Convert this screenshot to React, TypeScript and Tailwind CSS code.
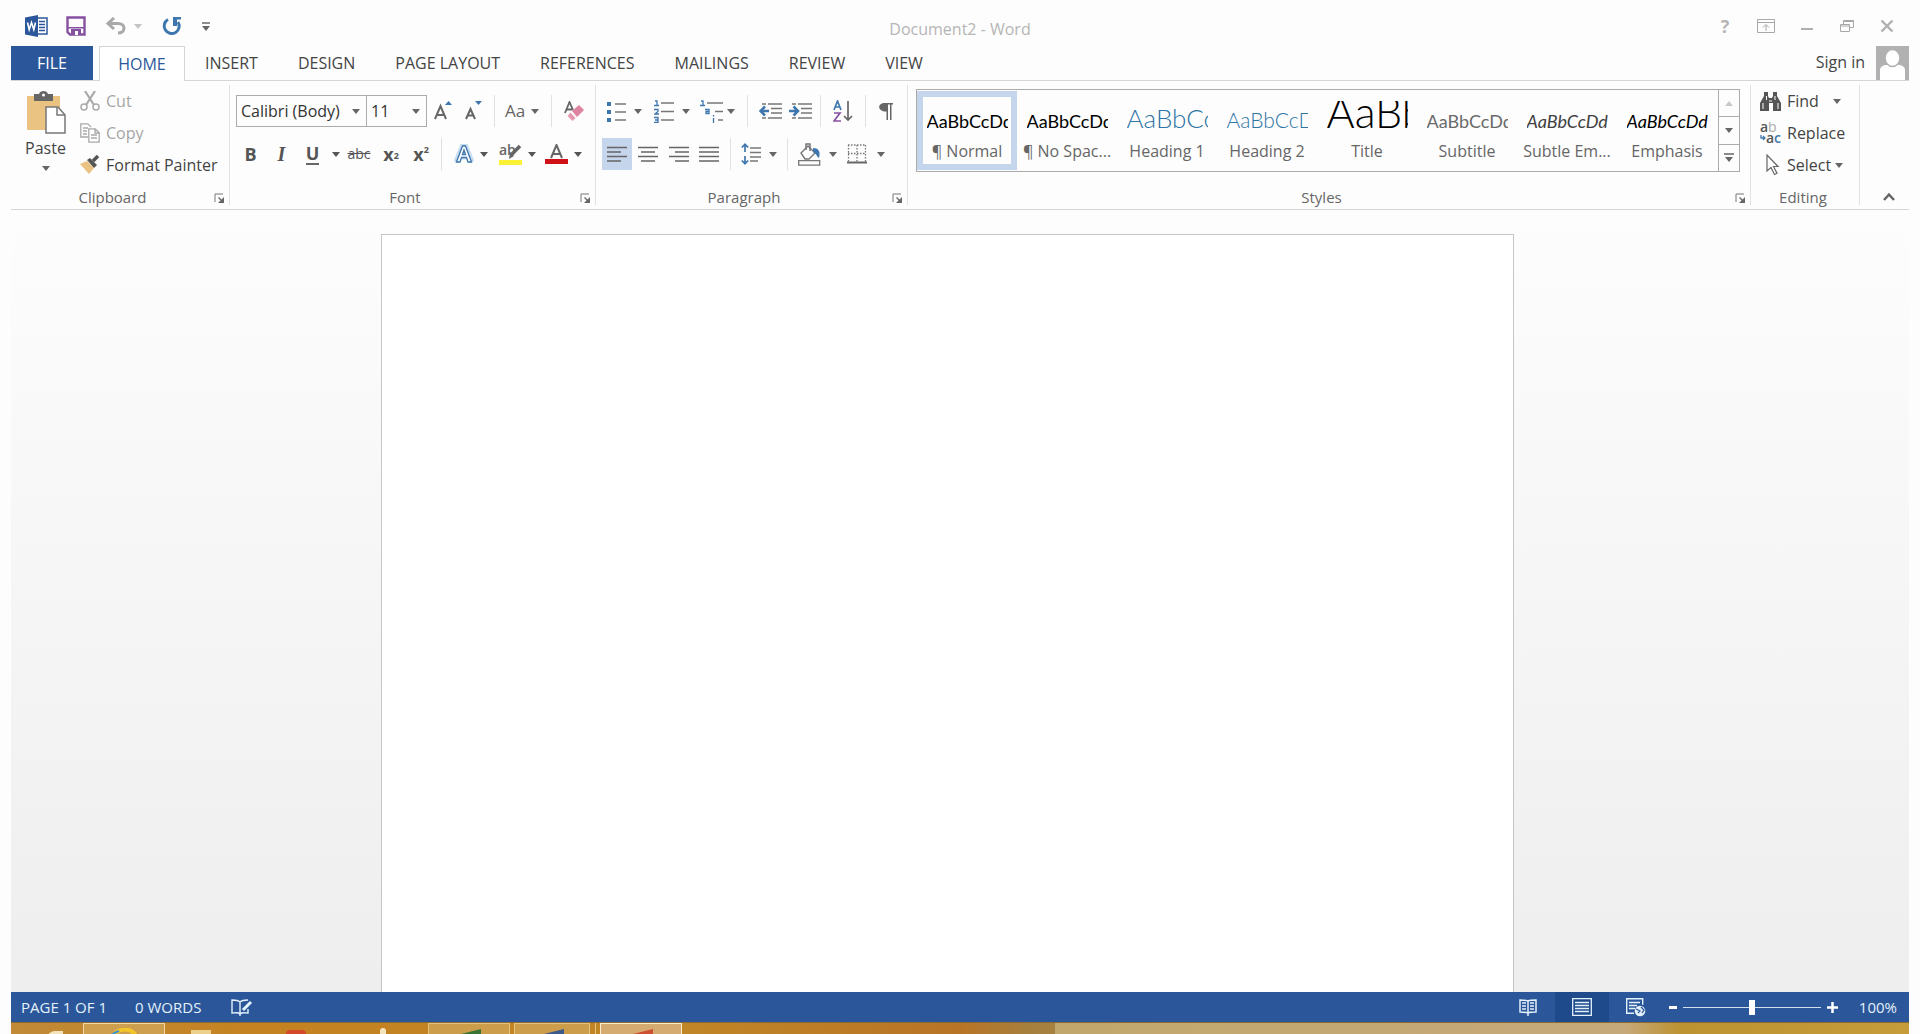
import type { ReactNode } from 'react';
import { clsx } from 'clsx';

const tabs = ['INSERT', 'DESIGN', 'PAGE LAYOUT', 'REFERENCES', 'MAILINGS', 'REVIEW', 'VIEW'];

const styles = [
  { name: '¶ Normal', sample: 'AaBbCcDd', look: 'text-[18px] text-black', active: true },
  { name: '¶ No Spac...', sample: 'AaBbCcDd', look: 'text-[18px] text-black' },
  { name: 'Heading 1', sample: 'AaBbCc', look: 'text-[26px] font-light text-[#2e74a5]' },
  { name: 'Heading 2', sample: 'AaBbCcD', look: 'text-[21px] font-light text-[#2e74a5]' },
  { name: 'Title', sample: 'AaBb', look: 'text-[43px] font-light text-black' },
  { name: 'Subtitle', sample: 'AaBbCcDd', look: 'text-[18px] text-[#6a6a6a]' },
  { name: 'Subtle Em...', sample: 'AaBbCcDd', look: 'text-[18px] italic text-[#404040]' },
  { name: 'Emphasis', sample: 'AaBbCcDd', look: 'text-[18px] italic text-black' },
];

function Caret({ className }: { className?: string }) {
  return (
    <svg viewBox="0 0 8 5" className={clsx('h-[5px] w-2 shrink-0', className)} fill="currentColor" aria-hidden="true">
      <path d="M0 0h8L4 5z" />
    </svg>
  );
}

function Icon({ w, h, children }: { w: number; h: number; children: ReactNode }) {
  return (
    <svg width={w} height={h} viewBox={`0 0 ${w} ${h}`} fill="none" className="shrink-0" aria-hidden="true">
      {children}
    </svg>
  );
}

type ToolProps = { label: string; className?: string; children: ReactNode };

function Tool({ label, className, children }: ToolProps) {
  return (
    <button type="button" aria-label={label} className={clsx('flex h-8 shrink-0 items-center justify-center', className)}>
      {children}
    </button>
  );
}

function Drop({ label, className }: { label: string; className?: string }) {
  return (
    <Tool label={label} className={clsx('w-4', className)}>
      <Caret />
    </Tool>
  );
}

function Divider({ className }: { className?: string }) {
  return <span className={clsx('h-8 w-px shrink-0 bg-[#e1e1e1]', className)} />;
}

type GroupProps = { label: string; launcher?: boolean; className?: string; children: ReactNode };

function Group({ label, launcher = true, className, children }: GroupProps) {
  return (
    <section aria-label={label} className={clsx('flex flex-col border-r border-[#e1e1e1]', className)}>
      <div className="flex-1">{children}</div>
      <div className="flex h-4 items-center pr-1">
        <span className="flex-1 text-center text-[15px] leading-4 text-[#666]">{label}</span>
        {launcher && (
          <button type="button" aria-label={`${label} settings`} className="pt-0.5">
            <Icon w={11} h={11}>
              <path d="M1 9V1h8" stroke="#777" />
              <path d="M4.500 4.500 8.500 8.500" stroke="#666" strokeWidth="1.300" />
              <path d="M10 4v6H4z" fill="#666" />
            </Icon>
          </button>
        )}
      </div>
    </section>
  );
}

function TitleBar() {
  return (
    <header className="flex h-[46px] items-center px-3.5 text-[#b5b5b5]">
      <div className="flex flex-1 items-center pt-1.5">
        <Tool label="Word" className="w-[23px]">
          <Icon w={23} h={22}>
            <rect x="11" y="3" width="11" height="16" fill="#fff" stroke="#2b579a" strokeWidth="1.500" />
            <path d="M14 6.500h6M14 9.500h6M14 12.500h6M14 15.500h6" stroke="#2b579a" strokeWidth="1.500" />
            <path d="M0 2.500 13 0v22L0 19.500z" fill="#2b579a" />
            <path d="m2.500 7.500 1.700 7 2.300-7 2.300 7 1.700-7" stroke="#fff" strokeWidth="1.600" />
          </Icon>
        </Tool>
        <Tool label="Save" className="ml-[18px] w-5">
          <Icon w={20} h={20}>
            <path d="M1.500 1.500h17v17H4l-2.500-2.500z" stroke="#8650a0" strokeWidth="2.400" />
            <path d="M2 11h16v1.500H2zM5 13h10v6H5z" fill="#8650a0" />
            <path d="M9 15h3v4H9z" fill="#fff" />
          </Icon>
        </Tool>
        <Tool label="Undo" className="ml-5 w-5">
          <Icon w={20} h={18}>
            <path d="M8 1 2 6.500 8 12M2.500 6.500H12c8 0 8 9.500 0 9.500" stroke="#a9a9a9" strokeWidth="3" />
          </Icon>
        </Tool>
        <Drop label="Undo history" className="ml-1 text-[#c4c4c4]" />
        <Tool label="Repeat" className="ml-4 w-5">
          <Icon w={20} h={20}>
            <path d="M6 3.500A7.500 7.500 0 1 0 16 6" stroke="#3e77ae" strokeWidth="3" />
            <path d="M11 1h8v2.500h-4V10h-4z" fill="#3e77ae" />
          </Icon>
        </Tool>
        <Tool label="Customize toolbar" className="ml-5 w-2 text-[#666]">
          <Icon w={8} h={9}>
            <path d="M0 1h8" stroke="#666" strokeWidth="1.500" />
            <path d="M0 4h8L4 9z" fill="#666" />
          </Icon>
        </Tool>
      </div>
      <h1 className="pt-3 text-base leading-6">Document2 - Word</h1>
      <div className="flex flex-1 items-center justify-end pt-1.5">
        <Tool label="Help" className="w-6 text-lg font-bold">
          ?
        </Tool>
        <Tool label="Ribbon display options" className="ml-5 w-[18px]">
          <Icon w={18} h={14}>
            <path d="M.5.5h17v13H.5zM.5 3.500h17M9 12V6M6 8.500l3-3 3 3" stroke="#a8a8a8" />
          </Icon>
        </Tool>
        <Tool label="Minimize" className="ml-6 w-4">
          <Icon w={12} h={14}>
            <path d="M0 10h12" stroke="#b0b0b0" strokeWidth="2" />
          </Icon>
        </Tool>
        <Tool label="Restore" className="ml-6 w-4">
          <Icon w={14} h={14}>
            <path d="M.5 5.500h9v7h-9zM.5 7h9M3.500 5V1.500h10v7H10M3.500 2.500h10" stroke="#a8a8a8" />
          </Icon>
        </Tool>
        <Tool label="Close" className="ml-6 w-4">
          <Icon w={14} h={14}>
            <path d="m1.500 1.500 11 11M12.500 1.500l-11 11" stroke="#b0b0b0" strokeWidth="2.400" />
          </Icon>
        </Tool>
      </div>
    </header>
  );
}

function TabBar() {
  return (
    <nav className="flex h-[35px] border-b border-[#d5d5d5] text-base leading-8 text-[#444]">
      <button type="button" className="w-[82px] bg-[#2b579a] text-white">
        FILE
      </button>
      <button type="button" className="-mb-px ml-1.5 w-[86px] border border-b-0 border-[#d5d5d5] bg-white text-[#2b579a]">
        HOME
      </button>
      {tabs.map((tab) => (
        <button key={tab} type="button" className="px-5">
          {tab}
        </button>
      ))}
      <a href="#sign-in" className="ml-auto pr-[11px]">
        Sign in
      </a>
      <Icon w={33} h={34}>
        <path d="M0 0h33v34H0z" fill="#b1b1b1" />
        <path d="M4 34V24c0-3 3-5 7-5h11c4 0 7 2 7 5v10z" fill="#fff" />
        <ellipse cx="16.500" cy="12" rx="7.500" ry="8.500" fill="#fff" stroke="#b1b1b1" strokeWidth="1.500" />
      </Icon>
    </nav>
  );
}

function ClipboardGroup() {
  return (
    <Group label="Clipboard" className="w-[219px]">
      <div className="flex">
        <button type="button" className="flex w-[69px] flex-col items-center pt-1.5 text-base text-[#444]">
          <Icon w={40} h={43}>
            <path d="M1 5h33v34H1z" fill="#eac282" />
            <path d="M8 3h5c1-4 8-4 9 0h5v7H8z" fill="#666" />
            <circle cx="17.500" cy="4" r="1.500" fill="#fff" />
            <path d="M20 16h12l7 8v18H20z" fill="#fff" stroke="#777" strokeWidth="1.500" />
            <path d="M31 16v8h8" stroke="#777" strokeWidth="1.500" />
          </Icon>
          <span className="mt-0.5 leading-6">Paste</span>
          <Caret className="mt-1.5 text-[#666]" />
        </button>
        <div className="flex flex-col text-base text-[#a6a6a6]">
          <button type="button" className="flex h-8 items-center gap-1.5">
            <Icon w={20} h={20}>
              <path d="m5 0 9 14M15 0 6 14" stroke="#a9a9a9" strokeWidth="2.200" />
              <circle cx="4" cy="16" r="3" stroke="#a9a9a9" strokeWidth="1.500" />
              <circle cx="16" cy="16" r="3" stroke="#a9a9a9" strokeWidth="1.500" />
            </Icon>
            Cut
          </button>
          <button type="button" className="flex h-8 items-center gap-1.5">
            <Icon w={20} h={20}>
              <path d="M8 14H.8V.8h7L11 4M3 5h5M3 8h4M3 11h4" stroke="#a9a9a9" strokeWidth="1.300" />
              <path d="M8.800 5.800h6.400l4 4v9.400H8.800zM15 6v4h4M11 12h6M11 15h6" fill="#fff" stroke="#a9a9a9" strokeWidth="1.300" />
            </Icon>
            Copy
          </button>
          <button type="button" className="flex h-8 items-center gap-1.5 text-[#444]">
            <Icon w={20} h={20}>
              <path d="m0 9 7-3 7 7-5 6z" fill="#eac282" />
              <path d="m7 5 3-2 7 7-3 3z" fill="#555" />
              <path d="m13 6 5-5" stroke="#555" strokeWidth="3.500" />
            </Icon>
            Format Painter
          </button>
        </div>
      </div>
    </Group>
  );
}

function FontGroup() {
  return (
    <Group label="Font" className="w-[366px]">
      <div className="flex items-center pt-2.5 pl-1.5 text-[#666]">
        <div className="flex h-8 text-base text-[#333]">
          <div className="flex w-[131px] items-center border border-[#ababab] pr-1.5">
            <input aria-label="Font" defaultValue="Calibri (Body)" className="min-w-0 flex-1 pl-1 outline-none" />
            <Caret className="text-[#666]" />
          </div>
          <div className="-ml-px flex w-[61px] items-center border border-[#ababab] pr-1.5">
            <input aria-label="Font size" defaultValue="11" className="min-w-0 flex-1 pl-1 outline-none" />
            <Caret className="text-[#666]" />
          </div>
        </div>
        <Tool label="Grow font" className="ml-1 w-6">
          <Icon w={18} h={20}>
            <path d="m1 18 5.500-13 5.500 13M3 14h7" stroke="#666" strokeWidth="2" />
            <path d="m11 4 3.500-4L18 4z" fill="#3e77ae" />
          </Icon>
        </Tool>
        <Tool label="Shrink font" className="ml-[7px] w-6">
          <Icon w={18} h={20}>
            <path d="m1 18 4.500-10L10 18M3 14.500h5" stroke="#666" strokeWidth="2" />
            <path d="m10 0 3.500 4L17 0z" fill="#3e77ae" />
          </Icon>
        </Tool>
        <Divider className="ml-2" />
        <Tool label="Change case" className="ml-2.5 text-[17px]">
          Aa
        </Tool>
        <Drop label="Case options" className="ml-0.5" />
        <Divider className="ml-2" />
        <Tool label="Clear formatting" className="ml-3 w-5">
          <Icon w={20} h={21}>
            <path d="m1 12 4.500-11L9 9M2.500 8.500h6" stroke="#666" strokeWidth="1.800" />
            <path d="m8 10 7-6 5 5-7 7z" fill="#df84a0" />
            <path d="m6.500 11.500 5 5.500-3 3-5-5z" fill="#e79bb1" />
          </Icon>
        </Tool>
      </div>
      <div className="flex items-center pt-[11px] pl-[5px] text-lg text-[#555]">
        <Tool label="Bold" className="w-[31px] font-bold">
          B
        </Tool>
        <Tool label="Italic" className="w-[31px] font-bold italic">
          <span className="font-['Liberation_Serif',serif] text-xl">I</span>
        </Tool>
        <Tool label="Underline" className="w-[31px] font-bold">
          <span className="border-b-2 border-[#666] leading-5">U</span>
        </Tool>
        <Drop label="Underline style" />
        <Tool label="Strikethrough" className="ml-[3px] w-6 text-sm font-medium line-through">
          abc
        </Tool>
        <Tool label="Subscript" className="ml-2 w-6 font-bold">
          x<sub className="text-[9px]">2</sub>
        </Tool>
        <Tool label="Superscript" className="ml-1.5 w-6 font-bold">
          x<sup className="text-[9px]">2</sup>
        </Tool>
        <Divider className="ml-2" />
        <Tool label="Text effects" className="ml-3 w-5">
          <Icon w={20} h={20}>
            <path d="m2 18 6.500-16h3L18 18M5.500 13h9" stroke="#c3dcf3" strokeWidth="5" />
            <path d="m2.500 18 6-16h3l6 16h-3.500l-1.500-4.500h-5L6 18zM8.500 10.500h3L10 6z" fill="#fff" stroke="#3e77ae" strokeWidth="1.300" />
          </Icon>
        </Tool>
        <Drop label="Effect options" className="ml-0.5" />
        <Tool label="Highlight" className="ml-1.5 w-6">
          <Icon w={23} h={23}>
            <text x="0" y="12" fontSize="14" fontWeight="600" fill="#666">ab</text>
            <path d="m21 3-9 9" stroke="#666" strokeWidth="3.500" />
            <path d="m11 9 4 4-5 3z" fill="#666" />
            <path d="M0 17h23v5H0z" fill="#fbf236" />
          </Icon>
        </Tool>
        <Drop label="Highlight color" className="ml-0.5" />
        <Tool label="Font color" className="ml-1 w-6">
          <Icon w={23} h={21}>
            <path d="m6 14 5.500-13L17 14M8 10h7" stroke="#666" strokeWidth="2" />
            <path d="M0 15h23v5H0z" fill="#d01118" />
          </Icon>
        </Tool>
        <Drop label="Font color options" className="ml-0.5" />
      </div>
    </Group>
  );
}

function AlignIcon({ d }: { d: string }) {
  return (
    <Icon w={20} h={16}>
      <path d={d} stroke="#666" strokeWidth="1.500" />
    </Icon>
  );
}

function ParagraphGroup() {
  return (
    <Group label="Paragraph" className="w-[312px]">
      <div className="flex items-center pt-2.5 pl-2.5 text-[#666]">
        <Tool label="Bullets" className="w-5">
          <Icon w={19} h={21}>
            <path d="M8 3h11M8 11h11M8 19h11" stroke="#777" strokeWidth="1.500" />
            <path d="M0 1h4v4H0zM0 9h4v4H0zM0 17h4v4H0z" fill="#3e77ae" />
          </Icon>
        </Tool>
        <Drop label="Bullet options" className="ml-1" />
        <Tool label="Numbering" className="ml-2 w-5">
          <Icon w={20} h={23}>
            <path d="M7 3h13M7 11.500h13M7 20h13" stroke="#777" strokeWidth="1.500" />
            <path d="M1 1h2v5M0 5.500h5M0 9.500h4v2l-3 2.500h4M0 17.500h4v5H0M1 20h3" stroke="#3e77ae" strokeWidth="1.300" />
          </Icon>
        </Tool>
        <Drop label="Numbering options" className="ml-1" />
        <Tool label="Multilevel list" className="ml-1.5 w-[23px]">
          <Icon w={23} h={23}>
            <path d="M7 3h16M15 11.500h8M18 20h5" stroke="#777" strokeWidth="1.500" />
            <path d="M1 1h2v5M0 5.500h5M5 9.500h4v4H6v-2h3M13.500 18v5M13.500 15v1.500" stroke="#3e77ae" strokeWidth="1.300" />
          </Icon>
        </Tool>
        <Drop label="Multilevel options" />
        <Divider className="ml-2" />
        <Tool label="Decrease indent" className="ml-2.5 w-6">
          <Icon w={23} h={16}>
            <path d="M3 1h4M9 1h14M12 5.500h11M12 10h11M3 15h4M9 15h14" stroke="#777" strokeWidth="1.500" />
            <path d="M1 8h9M6 3.500 1.500 8 6 12.500" stroke="#3e77ae" strokeWidth="2.500" />
          </Icon>
        </Tool>
        <Tool label="Increase indent" className="ml-1.5 w-6">
          <Icon w={23} h={16}>
            <path d="M3 1h4M9 1h14M12 5.500h11M12 10h11M3 15h4M9 15h14" stroke="#777" strokeWidth="1.500" />
            <path d="M0 8h9M4.500 3.500 9 8l-4.500 4.500" stroke="#3e77ae" strokeWidth="2.500" />
          </Icon>
        </Tool>
        <Divider className="ml-2" />
        <Tool label="Sort" className="ml-3 w-5">
          <Icon w={20} h={22}>
            <path d="M1 10 4.500 1 8 10M2 7h5" stroke="#3e77ae" strokeWidth="1.700" />
            <path d="M1 13h6l-6 8h7" stroke="#8650a0" strokeWidth="1.700" />
            <path d="M15 1v19M11 16l4 4 4-4" stroke="#666" strokeWidth="1.700" />
          </Icon>
        </Tool>
        <Divider className="ml-3" />
        <Tool label="Show paragraph marks" className="ml-3 w-4">
          <Icon w={14} h={18}>
            <path d="M6 1h8v1.500h-1.500V18H11V2.500H9V18H7.500V9.500C-2 9.500-2 1 6 1z" fill="#666" />
          </Icon>
        </Tool>
      </div>
      <div className="flex items-center pt-[11px] pl-1.5 text-[#666]">
        <Tool label="Align left" className="w-[30px] bg-[#c5d5ec]">
          <AlignIcon d="M0 1.500h20M0 6h14M0 10.500h20M0 15h14" />
        </Tool>
        <Tool label="Center" className="w-[31px]">
          <AlignIcon d="M0 1.500h20M3 6h14M0 10.500h20M3 15h14" />
        </Tool>
        <Tool label="Align right" className="w-[31px]">
          <AlignIcon d="M0 1.500h20M6 6h14M0 10.500h20M6 15h14" />
        </Tool>
        <Tool label="Justify" className="w-[30px]">
          <AlignIcon d="M0 1.500h20M0 6h20M0 10.500h20M0 15h20" />
        </Tool>
        <Divider className="ml-1.5" />
        <Tool label="Line spacing" className="ml-2.5 w-5">
          <Icon w={20} h={22}>
            <path d="M9 5h11M9 9.500h11M9 14h11M9 18h8" stroke="#777" strokeWidth="1.500" />
            <path d="M4 1v8M.8 4.500 4 1.300l3.200 3.200M4 13v8M.8 17.500 4 20.700l3.200-3.200" stroke="#3e77ae" strokeWidth="1.700" />
          </Icon>
        </Tool>
        <Drop label="Line spacing options" className="ml-1" />
        <Divider className="ml-1.5" />
        <Tool label="Shading" className="ml-2.5 w-[23px]">
          <Icon w={23} h={23}>
            <path d="M.7 17.700h21v4.500H.7z" stroke="#777" strokeWidth="1.300" />
            <path d="m3 10 7-7 7 7-6 6H7z" fill="#fff" stroke="#777" strokeWidth="1.400" />
            <path d="M8 7V1h4v7" stroke="#777" strokeWidth="1.500" />
            <path d="M15 5c5 0 8 3 6 10-2-1-2-4-6-6z" fill="#3e77ae" />
          </Icon>
        </Tool>
        <Drop label="Shading color" className="ml-1" />
        <Tool label="Borders" className="ml-1.5 w-5">
          <Icon w={20} h={20}>
            <path d="M1 1h18M1 9.500h18M1.500 1v17M10 1v17M18.500 1v17" stroke="#777" strokeWidth="1.300" strokeDasharray="1.500 1.500" />
            <path d="M0 18.500h20" stroke="#666" strokeWidth="2" />
          </Icon>
        </Tool>
        <Drop label="Border options" className="ml-1.5" />
      </div>
    </Group>
  );
}

function StylesGroup() {
  return (
    <Group label="Styles" className="min-w-0 flex-1">
      <div className="mt-1 mr-2.5 ml-2 flex h-[83px] border border-[#ababab]">
        <div className="flex flex-1 overflow-hidden pt-px">
          {styles.map((style) => (
            <button
              key={style.name}
              type="button"
              className={clsx(
                'flex h-[79px] w-[100px] shrink-0 flex-col items-center border-[6px] pt-1',
                style.active ? 'border-[#c5d5ec]' : 'border-transparent',
              )}
            >
              <span className="flex h-10 w-[81px] items-baseline overflow-hidden font-['Lato',sans-serif] whitespace-nowrap">
                {/* strut that keeps every sample on one baseline */}
                <span className="inline-block h-[27px] w-0" />
                <span className={clsx('leading-5', style.look)}>{style.sample}</span>
              </span>
              <span className="text-base leading-5 whitespace-nowrap text-[#666]">{style.name}</span>
            </button>
          ))}
        </div>
        <div className="flex w-[21px] flex-col border-l border-[#ababab] text-[#666]">
          <button type="button" aria-label="Previous styles" className="flex flex-1 items-center justify-center text-[#c9c9c9]">
            <Caret className="rotate-180" />
          </button>
          <button type="button" aria-label="Next styles" className="flex flex-1 items-center justify-center border-y border-[#ababab]">
            <Caret />
          </button>
          <button type="button" aria-label="More styles" className="flex flex-1 items-center justify-center">
            <Icon w={10} h={9}>
              <path d="M0 1h10" stroke="#666" strokeWidth="1.500" />
              <path d="M1 4h8L5 9z" fill="#666" />
            </Icon>
          </button>
        </div>
      </div>
    </Group>
  );
}

function EditingGroup() {
  return (
    <Group label="Editing" launcher={false} className="w-[109px]">
      <div className="flex flex-col pl-[9px] text-base text-[#444]">
        <button type="button" className="flex h-8 items-center gap-1.5">
          <Icon w={21} h={19}>
            <path d="M4 0h4v4l1 2h3l1-2V0h4v4l4 7v8h-8v-8h-4v8H0v-8l4-7z" fill="#555" />
            <path d="M3 11v6M6.500 4v4M15 4v4M18 11v6M9 9h3" stroke="#fff" />
          </Icon>
          Find
          <Caret className="ml-2 text-[#666]" />
        </button>
        <button type="button" className="flex h-8 items-center gap-1.5">
          <Icon w={21} h={22}>
            <text x="0" y="10" fontSize="14" fontWeight="600" fill="#555">a</text>
            <text x="8" y="10" fontSize="14" fill="#aaa">b</text>
            <text x="6" y="21" fontSize="14" fontWeight="600" fill="#555">a</text>
            <text x="14" y="21" fontSize="14" fontWeight="600" fill="#3e77ae">c</text>
            <path d="M1 13v3h4M3 14l2 2-2 2" stroke="#3e77ae" strokeWidth="1.300" />
          </Icon>
          Replace
        </button>
        <button type="button" className="flex h-8 items-center gap-1 pl-1.5">
          <Icon w={17} h={22}>
            <path d="M1 1v16l4-3.500 3.500 7 2.500-1.200L7.500 12.500H12z" fill="#fff" stroke="#666" strokeWidth="1.200" />
          </Icon>
          Select
          <Caret className="text-[#666]" />
        </button>
      </div>
    </Group>
  );
}

function StatusBar() {
  return (
    <footer className="flex h-[30px] shrink-0 items-center bg-[#2b579a] pr-3 pl-2.5 text-[15px] text-[#e3f1fa]">
      <span>PAGE 1 OF 1</span>
      <span className="ml-7">0 WORDS</span>
      <Tool label="Proofing" className="ml-[30px] w-[22px]">
        <Icon w={22} h={19}>
          <path d="M9 16C7 14 4 15 1 15V2c4 0 6 0 8 2 2-2 4-2 8-2M9 4v14M9 16c2-2 5-1 8-1v-4" stroke="#e3f1fa" strokeWidth="1.400" />
          <path d="m12 12 8-8" stroke="#e3f1fa" strokeWidth="3" />
        </Icon>
      </Tool>
      <Tool label="Read mode" className="ml-auto w-[54px]">
        <Icon w={18} h={18}>
          <path d="M9 15c-2-1-5-1-8-1V2c4 0 6 0 8 1 2-1 4-1 8-1v12c-3 0-6 0-8 1zM9 3v15" stroke="#e3f1fa" strokeWidth="1.500" />
          <path d="M3 5h4M3 8h4M3 11h4M11 5h4M11 8h4M11 11h4" stroke="#e3f1fa" strokeWidth="1.300" />
        </Icon>
      </Tool>
      <span className="flex h-full w-[54px] items-center justify-center bg-[#1e4a8c]">
        <Tool label="Print layout">
          <Icon w={20} h={18}>
            <path d="M.7.700h18.600v16.600H.7zM3 4.500h14M3 7.500h14M3 10.500h14M3 13.500h14" stroke="#e3f1fa" strokeWidth="1.300" />
          </Icon>
        </Tool>
      </span>
      <Tool label="Web layout" className="w-[54px]">
        <Icon w={20} h={19}>
          <path d="M8 15.300H.7V.7h16v6M3 4.500h11M3 7.500h8M3 10.500h6" stroke="#e3f1fa" strokeWidth="1.400" />
          <circle cx="14" cy="13" r="5.300" fill="#e3f1fa" />
          <path d="m10 11 4 2-2 2M15 9l3 3-2 3" stroke="#2b579a" strokeWidth="1.300" />
        </Icon>
      </Tool>
      <Tool label="Zoom out" className="ml-1.5 w-2">
        <span className="h-[3px] w-2 bg-white" />
      </Tool>
      <input
        type="range"
        aria-label="Zoom"
        min={0}
        max={100}
        defaultValue={50}
        className="mx-1.5 h-4 w-[138px] appearance-none bg-transparent [&::-webkit-slider-runnable-track]:h-px [&::-webkit-slider-runnable-track]:bg-[#cfe0ef] [&::-webkit-slider-thumb]:-mt-[7px] [&::-webkit-slider-thumb]:h-[15px] [&::-webkit-slider-thumb]:w-1.5 [&::-webkit-slider-thumb]:appearance-none [&::-webkit-slider-thumb]:bg-white"
      />
      <Tool label="Zoom in" className="w-3">
        <Icon w={11} h={11}>
          <path d="M0 5.500h11M5.500 0v11" stroke="#fff" strokeWidth="2.500" />
        </Icon>
      </Tool>
      <span className="ml-5">100%</span>
    </footer>
  );
}

function TaskButton({ className, children }: { className?: string; children?: ReactNode }) {
  return (
    <span className={clsx('flex h-3 justify-center border border-b-0 pt-1', className)}>
      {children}
    </span>
  );
}

function Taskbar() {
  return (
    <div className="flex h-3 shrink-0 overflow-hidden border-t border-[#8a6a34] bg-[linear-gradient(90deg,#c08a38_0%,#c58220_13%,#c08526_36%,#b87426_50%,#a5803f_54%,#a5803f_55%,#c2a76c_55%,#c6a97a_85%,#bd9231_88%,#c59c39_100%)]">
      <span className="flex w-[72px] justify-end pt-2 pr-5">
        <span className="h-2 w-4 rounded-tl-full bg-[#f4e4bd]" />
      </span>
      <TaskButton className="w-[82px] border-[#f0d9a4] bg-[#cf9f50]">
        <Icon w={30} h={8}>
          <path d="M4 8C9 0 22-1 27 8" stroke="#f2c52b" strokeWidth="4" />
          <path d="M2 8c2-3 5-4 8-5" stroke="#3f8fd0" strokeWidth="2" />
        </Icon>
      </TaskButton>
      <span className="flex w-[263px] items-end justify-between pr-[42px] pl-[26px]">
        <span className="h-1 w-5 bg-[#ecd08c]" />
        <span className="h-1 w-5 rounded-t-full bg-[#d5492b]" />
        <span className="h-1.5 w-1.5 rounded-t-full bg-[#f4e4bd]" />
      </span>
      <TaskButton className="w-[82px] border-[#e6c27a] bg-[#cc9d4a]">
        <Icon w={24} h={7}>
          <path d="M0 7 24 1v6z" fill="#3b7535" />
        </Icon>
      </TaskButton>
      <TaskButton className="ml-1 w-[76px] border-[#e6c27a] bg-[#cc9d4a]">
        <Icon w={24} h={7}>
          <path d="M0 7 24 1v6z" fill="#3d5a8c" />
        </Icon>
      </TaskButton>
      <span className="w-1.5 border-r border-[#e6c27a]" />
      <TaskButton className="ml-1 w-[82px] border-[#fbeccb] bg-[#d6ab72]">
        <Icon w={24} h={7}>
          <path d="M0 7 24 1v6z" fill="#cf4f33" />
        </Icon>
      </TaskButton>
    </div>
  );
}

export default function App() {
  return (
    <div className="flex h-screen flex-col overflow-hidden bg-[#fdfdfd] px-[11px] font-['Open_Sans','Noto_Sans',sans-serif]">
      <TitleBar />
      <TabBar />
      <div className="flex h-[129px] shrink-0 border-b border-[#d5d5d5] py-1">
        <ClipboardGroup />
        <FontGroup />
        <ParagraphGroup />
        <StylesGroup />
        <EditingGroup />
        <button type="button" aria-label="Collapse the ribbon" className="flex w-[49px] items-end justify-center pb-1 pl-2">
          <Icon w={12} h={9}>
            <path d="m1 8 5-5.500L11 8" stroke="#666" strokeWidth="2.500" />
          </Icon>
        </button>
      </div>
      <main className="flex min-h-0 flex-1 bg-linear-to-b from-[#fdfdfd] to-[#eeeeee] pt-6 pr-[395px] pl-[370px]">
        <article aria-label="Document" className="flex-1 border border-b-0 border-[#c6c6c6] bg-white" />
      </main>
      <StatusBar />
      <Taskbar />
    </div>
  );
}
